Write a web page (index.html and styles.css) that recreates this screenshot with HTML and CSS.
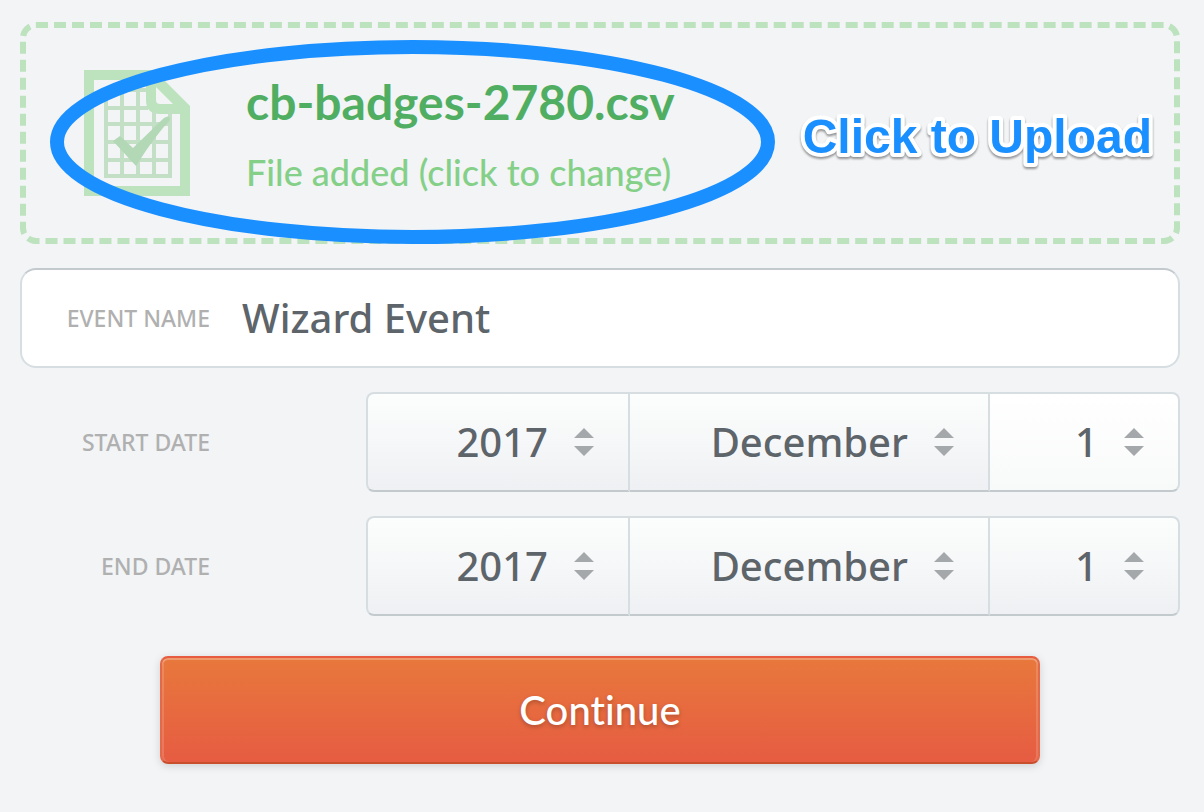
FILE: index.html
```html
<!DOCTYPE html>
<html lang="en">

<head>
    <meta charset="UTF-8">
    <meta name="viewport" content="width=device-width, initial-scale=1.0">
    <title>New Event</title>
    <link rel="stylesheet" href="styles.css">
</head>

<body>
    <form class="event-form">
        <div class="upload">
            <input type="file" id="csv" class="upload-input" accept=".csv">
            <label for="csv" class="upload-label">
                <svg class="upload-icon" viewBox="0 0 106 126" aria-hidden="true">
                    <path fill="#bce2be" fill-rule="evenodd" d="M0 0H70L106 36V126H0ZM10 10V116H96V44H76Q62 44 62 30V10ZM72 17V30Q72 34 76 34H89Z" />
                    <g fill="none" stroke="#c3dfc5" stroke-width="4">
                        <path d="M62 20H22V106H86V40" />
                        <path d="M22 38H64M22 54H86M22 72H86M22 90H86M38 20V106M54 20V106M70 42V106" />
                    </g>
                    <path fill="#b2d8b6" d="M29 71L36 66L49 78L80 48Q86 44 86 50Q70 67 52 96Z" />
                </svg>
                <span class="upload-text">
                    <strong class="file-name">cb-badges-2780.csv</strong>
                    <span class="file-note">File added (click to change)</span>
                </span>
                <svg class="hint" viewBox="0 0 370 70">
                    <text x="360" y="48" text-anchor="end">Click to Upload</text>
                </svg>
            </label>
            <svg class="ring" viewBox="0 0 725 204" aria-hidden="true">
                <ellipse cx="362.5" cy="102" rx="355.5" ry="95" />
            </svg>
        </div>

        <div class="name-field">
            <label for="name" class="label">Event name</label>
            <input type="text" id="name" value="Wizard Event">
        </div>

        <div class="date-row">
            <label for="start-year" class="label">Start date</label>
            <div class="selects">
                <div class="select">
                    <select id="start-year">
                        <option>2017</option>
                        <option>2018</option>
                    </select>
                    <svg class="arrows" viewBox="0 0 20 28" aria-hidden="true"><path d="M0 10L10 0L20 10ZM0 18H20L10 28Z" /></svg>
                </div>
                <div class="select">
                    <select aria-label="Start month">
                        <option>December</option>
                        <option>January</option>
                    </select>
                    <svg class="arrows" viewBox="0 0 20 28" aria-hidden="true"><path d="M0 10L10 0L20 10ZM0 18H20L10 28Z" /></svg>
                </div>
                <div class="select">
                    <select class="light" aria-label="Start day">
                        <option>1</option>
                        <option>2</option>
                    </select>
                    <svg class="arrows" viewBox="0 0 20 28" aria-hidden="true"><path d="M0 10L10 0L20 10ZM0 18H20L10 28Z" /></svg>
                </div>
            </div>
        </div>

        <div class="date-row">
            <label for="end-year" class="label">End date</label>
            <div class="selects">
                <div class="select">
                    <select id="end-year">
                        <option>2017</option>
                        <option>2018</option>
                    </select>
                    <svg class="arrows" viewBox="0 0 20 28" aria-hidden="true"><path d="M0 10L10 0L20 10ZM0 18H20L10 28Z" /></svg>
                </div>
                <div class="select">
                    <select aria-label="End month">
                        <option>December</option>
                        <option>January</option>
                    </select>
                    <svg class="arrows" viewBox="0 0 20 28" aria-hidden="true"><path d="M0 10L10 0L20 10ZM0 18H20L10 28Z" /></svg>
                </div>
                <div class="select">
                    <select aria-label="End day">
                        <option>1</option>
                        <option>2</option>
                    </select>
                    <svg class="arrows" viewBox="0 0 20 28" aria-hidden="true"><path d="M0 10L10 0L20 10ZM0 18H20L10 28Z" /></svg>
                </div>
            </div>
        </div>

        <button type="submit" class="continue">Continue</button>
    </form>
</body>

</html>
```
FILE: styles.css
```css
* {
    box-sizing: border-box;
    margin: 0;
    padding: 0;
}

body {
    background: #f2f4f6;
    font-family: Lato, sans-serif;
    font-variant-ligatures: none;
}

.event-form {
    display: flex;
    flex-direction: column;
    gap: 24px;
    padding: 22px 24px 48px 20px;
}

/* upload box */
.upload {
    position: relative;
    border: 6px dashed #bce2be;
    border-radius: 16px;
}

.upload-input {
    position: absolute;
    width: 1px;
    height: 1px;
    opacity: 0;
}

.upload-label {
    display: flex;
    align-items: center;
    height: 210px;
    padding: 0 12px 0 58px;
    cursor: pointer;
}

.upload-icon {
    width: 106px;
    height: 126px;
    margin-right: 56px;
}

.upload-text {
    display: flex;
    flex-direction: column;
    gap: 12px;
    padding-top: 6px;
}

.file-name {
    font-size: 48px;
    line-height: 60px;
    color: #50ae62;
}

.file-note {
    font-size: 36px;
    font-weight: 500;
    line-height: 56px;
    color: #85d088;
}

.hint {
    width: 370px;
    height: 70px;
    margin-top: 14px;
    margin-left: auto;
    font-family: "Liberation Sans", Arial, sans-serif;
    font-size: 48px;
    font-weight: bold;
    fill: #1a8fff;
    stroke: #fff;
    stroke-width: 8px;
    stroke-linejoin: round;
    paint-order: stroke;
    filter: drop-shadow(0 2px 1px rgba(0, 0, 0, 0.4));
}

.ring {
    position: absolute;
    top: 12px;
    left: 24px;
    width: 725px;
    height: 204px;
    pointer-events: none;
}

.ring ellipse {
    fill: none;
    stroke: #1a8fff;
    stroke-width: 14px;
}

/* fields */
.label {
    width: 190px;
    font-family: "Noto Sans", sans-serif;
    font-size: 23px;
    font-weight: 500;
    text-align: right;
    text-transform: uppercase;
    color: #b0b0b0;
}

input[type="text"],
select {
    font-family: "Noto Sans", sans-serif;
    font-size: 40px;
    font-weight: 500;
    color: #5d646a;
    outline: none;
}

.name-field {
    display: flex;
    align-items: center;
    height: 100px;
    border: 2px solid #d7dee2;
    border-top-color: #c3cace;
    border-radius: 16px;
    background: #fff;
}

.name-field .label {
    width: 188px;
}

.name-field input {
    flex: 1;
    min-width: 0;
    margin-left: 32px;
    padding-bottom: 2px;
    border: 0;
    background: none;
}

.date-row {
    display: grid;
    grid-template-columns: 346px 1fr;
    align-items: center;
}

.selects {
    display: grid;
    grid-template-columns: 264fr 360fr 190fr;
}

.select {
    position: relative;
}

select {
    display: block;
    width: 100%;
    height: 100px;
    padding-right: 80px;
    padding-bottom: 2px;
    appearance: none;
    border: 2px solid #d7dee2;
    border-left-width: 0;
    border-bottom-color: #c3cace;
    border-radius: 0;
    background: linear-gradient(#fcfefd, #eff0f3);
    text-align: right;
    text-align-last: right;
}

select.light {
    background: linear-gradient(#fff, #f8faf9);
}

.select:first-child select {
    border-left-width: 2px;
    border-radius: 8px 0 0 8px;
}

.select:last-child select {
    border-radius: 0 8px 8px 0;
}

.arrows {
    position: absolute;
    top: 36px;
    right: 36px;
    width: 20px;
    height: 28px;
    fill: #a5a8ab;
    pointer-events: none;
}

.continue {
    align-self: center;
    width: 880px;
    max-width: 100%;
    height: 108px;
    margin-top: 16px;
    border: 2px solid #e2694a;
    border-top-color: #e75c40;
    border-bottom-color: #c84e2c;
    border-radius: 8px;
    background: linear-gradient(#e8783c, #e65c42);
    box-shadow: inset 0 2px 0 rgba(255, 255, 255, 0.25), inset 2px 0 0 rgba(255, 255, 255, 0.15), inset -2px 0 0 rgba(255, 255, 255, 0.15), 0 2px 8px rgba(0, 0, 0, 0.15);
    font-family: Lato, sans-serif;
    font-size: 40px;
    font-weight: 500;
    font-variant-ligatures: none;
    color: #fff;
    text-shadow: 0 2px 4px rgba(0, 0, 0, 0.25);
    cursor: pointer;
}
```
